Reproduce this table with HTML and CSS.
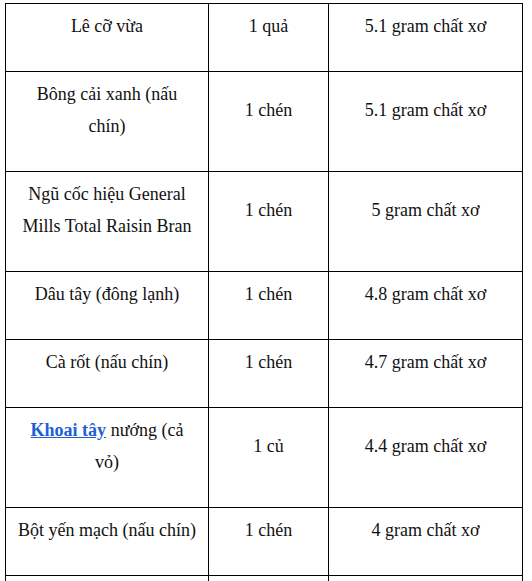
FILE: index.html
```html
<!DOCTYPE html>
<html lang="vi">
<head>
<meta charset="utf-8">
<link rel="stylesheet" href="styles.css">
</head>
<body>
<table class="fiber">
  <colgroup>
    <col class="c1"><col class="c2"><col class="c3">
  </colgroup>
  <tbody>
    <tr><td><p>Lê cỡ vừa</p></td><td><p>1 quả</p></td><td><p>5.1 gram chất xơ</p></td></tr>
    <tr><td><p>Bông cải xanh (nấu chín)</p></td><td><p>1 chén</p></td><td><p>5.1 gram chất xơ</p></td></tr>
    <tr><td><p>Ngũ cốc hiệu General Mills Total Raisin Bran</p></td><td><p>1 chén</p></td><td><p>5 gram chất xơ</p></td></tr>
    <tr><td><p>Dâu tây (đông lạnh)</p></td><td><p>1 chén</p></td><td><p>4.8 gram chất xơ</p></td></tr>
    <tr><td><p>Cà rốt (nấu chín)</p></td><td><p>1 chén</p></td><td><p>4.7 gram chất xơ</p></td></tr>
    <tr><td><p><a class="link" href="#">Khoai tây</a> nướng (cả vỏ)</p></td><td><p>1 củ</p></td><td><p>4.4 gram chất xơ</p></td></tr>
    <tr><td><p>Bột yến mạch (nấu chín)</p></td><td><p>1 chén</p></td><td><p>4 gram chất xơ</p></td></tr>
    <tr><td><p>Đậu xanh (nấu chín)</p></td><td><p>1 chén</p></td><td><p>4 gram chất xơ</p></td></tr>
  </tbody>
</table>
</body>
</html>
```
FILE: styles.css
```css
html, body {
  margin: 0;
  padding: 0;
  background: #ffffff;
}
body {
  padding: 3px 0 0 5px;
  font-family: "Liberation Serif", "Times New Roman", serif;
  font-size: 18px;
  color: #111111;
}
.fiber {
  border-collapse: collapse;
  table-layout: fixed;
  width: 517px;
}
.c1 { width: 203px; }
.c2 { width: 120px; }
.c3 { width: 194px; }
.fiber td {
  border: 1px solid #000000;
  padding: 5.5px 11.5px;
  text-align: center;
  vertical-align: middle;
}
.fiber p {
  margin: 0 0 24px;
  line-height: 32px;
}
.link {
  color: #1f5fd6;
  font-weight: bold;
  text-decoration: underline;
}
```
